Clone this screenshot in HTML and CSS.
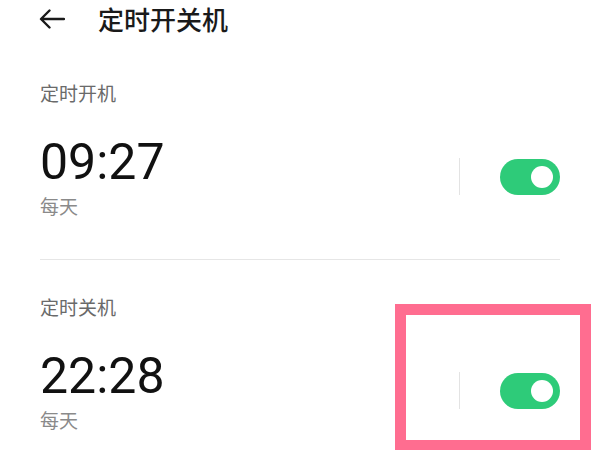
FILE: index.html
```html
<!DOCTYPE html>
<html lang="zh-CN">
<head>
<meta charset="utf-8">
<title>定时开关机</title>
<link rel="stylesheet" href="styles.css">
</head>
<body>
<header class="header">
  <svg class="back" width="26" height="20" viewBox="0 0 26 20" aria-hidden="true">
    <path d="M25 10H2.5M10.5 1.5L2 10l8.5 8.5" fill="none" stroke="#1a1a1a" stroke-width="2.4" stroke-linecap="round" stroke-linejoin="round"/>
  </svg>
  <h1 class="title">定时开关机</h1>
</header>

<section class="section first">
  <div class="label">定时开机</div>
  <div class="row">
    <div class="info">
      <div class="time">09:27</div>
      <div class="repeat">每天</div>
    </div>
    <div class="controls">
      <span class="vline"></span>
      <span class="toggle"><span class="knob"></span></span>
    </div>
  </div>
</section>

<div class="sep"></div>

<section class="section second">
  <div class="label">定时关机</div>
  <div class="row">
    <div class="info">
      <div class="time">22:28</div>
      <div class="repeat">每天</div>
    </div>
    <div class="controls">
      <span class="vline"></span>
      <span class="toggle"><span class="knob"></span></span>
    </div>
  </div>
</section>

<div class="highlight"></div>
</body>
</html>
```
FILE: styles.css
```css
html, body {
  margin: 0;
  padding: 0;
  background: #ffffff;
  width: 600px;
  height: 450px;
  overflow: hidden;
  position: relative;
  font-family: Roboto, "Noto Sans CJK SC", sans-serif;
}

.header {
  display: flex;
  align-items: center;
  height: 38px;
  padding-left: 39px;
}

.back {
  display: block;
  flex: none;
}

.title {
  margin: 0 0 0 33px;
  font-family: "Noto Sans CJK SC", sans-serif;
  font-size: 26px;
  font-weight: 500;
  line-height: 38px;
  color: #1a1a1a;
}

.section {
  padding: 0 40px;
}

.first {
  margin-top: 42px;
}

.second {
  margin-top: 34px;
}

.label {
  font-family: "Noto Sans CJK SC", sans-serif;
  font-size: 19px;
  line-height: 26px;
  color: #6a6a6a;
}

.row {
  display: flex;
  align-items: center;
  justify-content: space-between;
  margin-top: 27px;
}

.time {
  font-family: Roboto, sans-serif;
  font-size: 50px;
  line-height: 59px;
  color: #111111;
}

.repeat {
  font-family: "Noto Sans CJK SC", sans-serif;
  font-size: 19px;
  line-height: 28px;
  color: #8a8a8a;
}

.controls {
  display: flex;
  align-items: center;
  gap: 40px;
}

.vline {
  display: block;
  width: 1px;
  height: 37px;
  background: #e3e3e3;
}

.toggle {
  display: flex;
  align-items: center;
  justify-content: flex-end;
  width: 60px;
  height: 36px;
  padding-right: 7px;
  box-sizing: border-box;
  border-radius: 18px;
  background: #2ecb79;
}

.knob {
  display: block;
  width: 22px;
  height: 22px;
  border-radius: 50%;
  background: #ffffff;
}

.sep {
  height: 1px;
  margin: 39px 40px 0;
  background: #e6e6e6;
}

.highlight {
  position: absolute;
  left: 395px;
  top: 304px;
  width: 196px;
  height: 147px;
  box-sizing: border-box;
  border: 11px solid #ff6d90;
}
```
